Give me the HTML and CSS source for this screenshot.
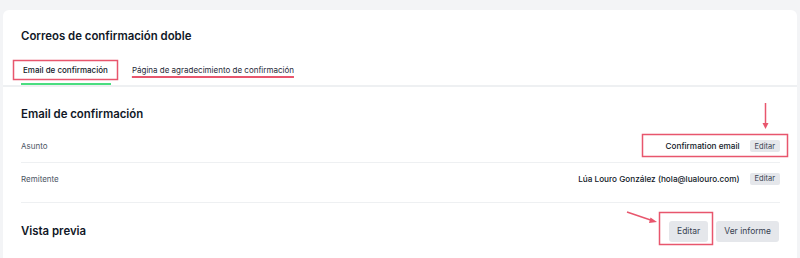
FILE: index.html
```html
<!DOCTYPE html>
<html lang="es">
<head>
<meta charset="utf-8">
<title>Correos de confirmación doble</title>
<link rel="stylesheet" href="styles.css">
</head>
<body>
<div class="page">
  <div class="card">
    <header class="card-head">
      <h1 class="title">Correos de confirmación doble</h1>
      <nav class="tabs">
        <a class="tab active">Email de confirmación</a>
        <a class="tab marked">Página de agradecimiento de confirmación</a>
      </nav>
    </header>
    <section class="card-body">
      <h2 class="section-title">Email de confirmación</h2>
      <div class="rows">
        <div class="row">
          <span class="label">Asunto</span>
          <div class="value-group">
            <span class="value">Confirmation email</span>
            <button class="btn-sm">Editar</button>
          </div>
        </div>
        <div class="row">
          <span class="label">Remitente</span>
          <div class="value-group">
            <span class="value">Lúa Louro González (hola@lualouro.com)</span>
            <button class="btn-sm">Editar</button>
          </div>
        </div>
      </div>
      <div class="preview">
        <h2 class="section-title">Vista previa</h2>
        <div class="actions">
          <button class="btn">Editar</button>
          <button class="btn">Ver informe</button>
        </div>
      </div>
    </section>
  </div>
  <svg class="annotations" width="800" height="258" viewBox="0 0 800 258" aria-hidden="true">
    <g fill="none" stroke="#e8566d" stroke-width="1.5">
      <rect x="13.5" y="60.5" width="104" height="19" />
      <rect x="642.5" y="134.5" width="145" height="22" />
      <rect x="659.5" y="212.5" width="53" height="32" />
      <line x1="765.5" y1="103" x2="765.5" y2="124" />
      <line x1="627" y1="212" x2="652" y2="220.5" />
    </g>
    <g fill="#e8566d">
      <polygon points="762.5,123 768.5,123 765.5,129" />
      <polygon points="650.5,217.5 649,223 657,222" />
    </g>
  </svg>
</div>
</body>
</html>
```
FILE: styles.css
```css
* { box-sizing: border-box; }
html, body { margin: 0; padding: 0; }
body {
  background: #f3f4f6;
  font-family: Inter, "Noto Sans", "Liberation Sans", sans-serif;
  color: #111827;
  width: 800px;
  height: 258px;
  overflow: hidden;
}
.page {
  position: relative;
  padding: 10px 3px 0 3px;
}
.card {
  background: #fff;
  border-radius: 6px 6px 0 0;
  border-bottom: 1px solid #eceef1;
}
.card-head {
  padding: 18px 17px 0 18px;
  border-bottom: 2px solid #eef0f2;
}
.title {
  margin: 0;
  font-size: 11.4px;
  line-height: 16px;
  font-weight: 600;
}
.tabs {
  display: flex;
  gap: 19px;
  margin-top: 20px;
}
.tab {
  font-size: 8px;
  line-height: 12px;
  padding: 0 3px 7px 2px;
  font-weight: 500;
  color: #111827;
  border-bottom: 2px solid transparent;
}
.tab.active { border-bottom-color: #4ade80; }
.tab.marked {
  font-weight: 400;
  color: #1f2937;
  text-decoration: underline;
  text-decoration-color: #e8566d;
  text-decoration-thickness: 1.5px;
  text-underline-offset: 3px;
}
.card-body {
  padding: 19px 17px 0 18px;
}
.section-title {
  margin: 0;
  font-size: 11.4px;
  line-height: 16px;
  font-weight: 600;
}
.rows {
  margin-top: 8px;
  border-bottom: 1px solid #eef0f2;
  padding-bottom: 8px;
}
.row {
  display: flex;
  align-items: center;
  justify-content: space-between;
  height: 32px;
}
.row + .row { border-top: 1px solid #eef0f2; }
.label {
  font-size: 8px;
  color: #4b5563;
}
.value-group {
  display: flex;
  align-items: center;
  gap: 10px;
}
.value {
  font-size: 8.2px;
  font-weight: 500;
  color: #111827;
}
.btn-sm {
  font-family: inherit;
  font-size: 7.5px;
  line-height: 11px;
  height: 12px;
  padding: 0 5px;
  border: 0;
  border-radius: 2px;
  background: #e5e7eb;
  color: #374151;
}
.preview {
  display: flex;
  align-items: center;
  justify-content: space-between;
  height: 55px;
  padding-top: 1px;
}
.actions {
  display: flex;
  gap: 8px;
  padding-right: 1px;
}
.btn {
  font-family: inherit;
  font-size: 8.5px;
  height: 21px;
  padding: 0 8px;
  border: 0;
  border-radius: 3px;
  background: #e5e7eb;
  color: #374151;
}
.annotations {
  position: absolute;
  left: 0;
  top: 0;
  pointer-events: none;
}
```
